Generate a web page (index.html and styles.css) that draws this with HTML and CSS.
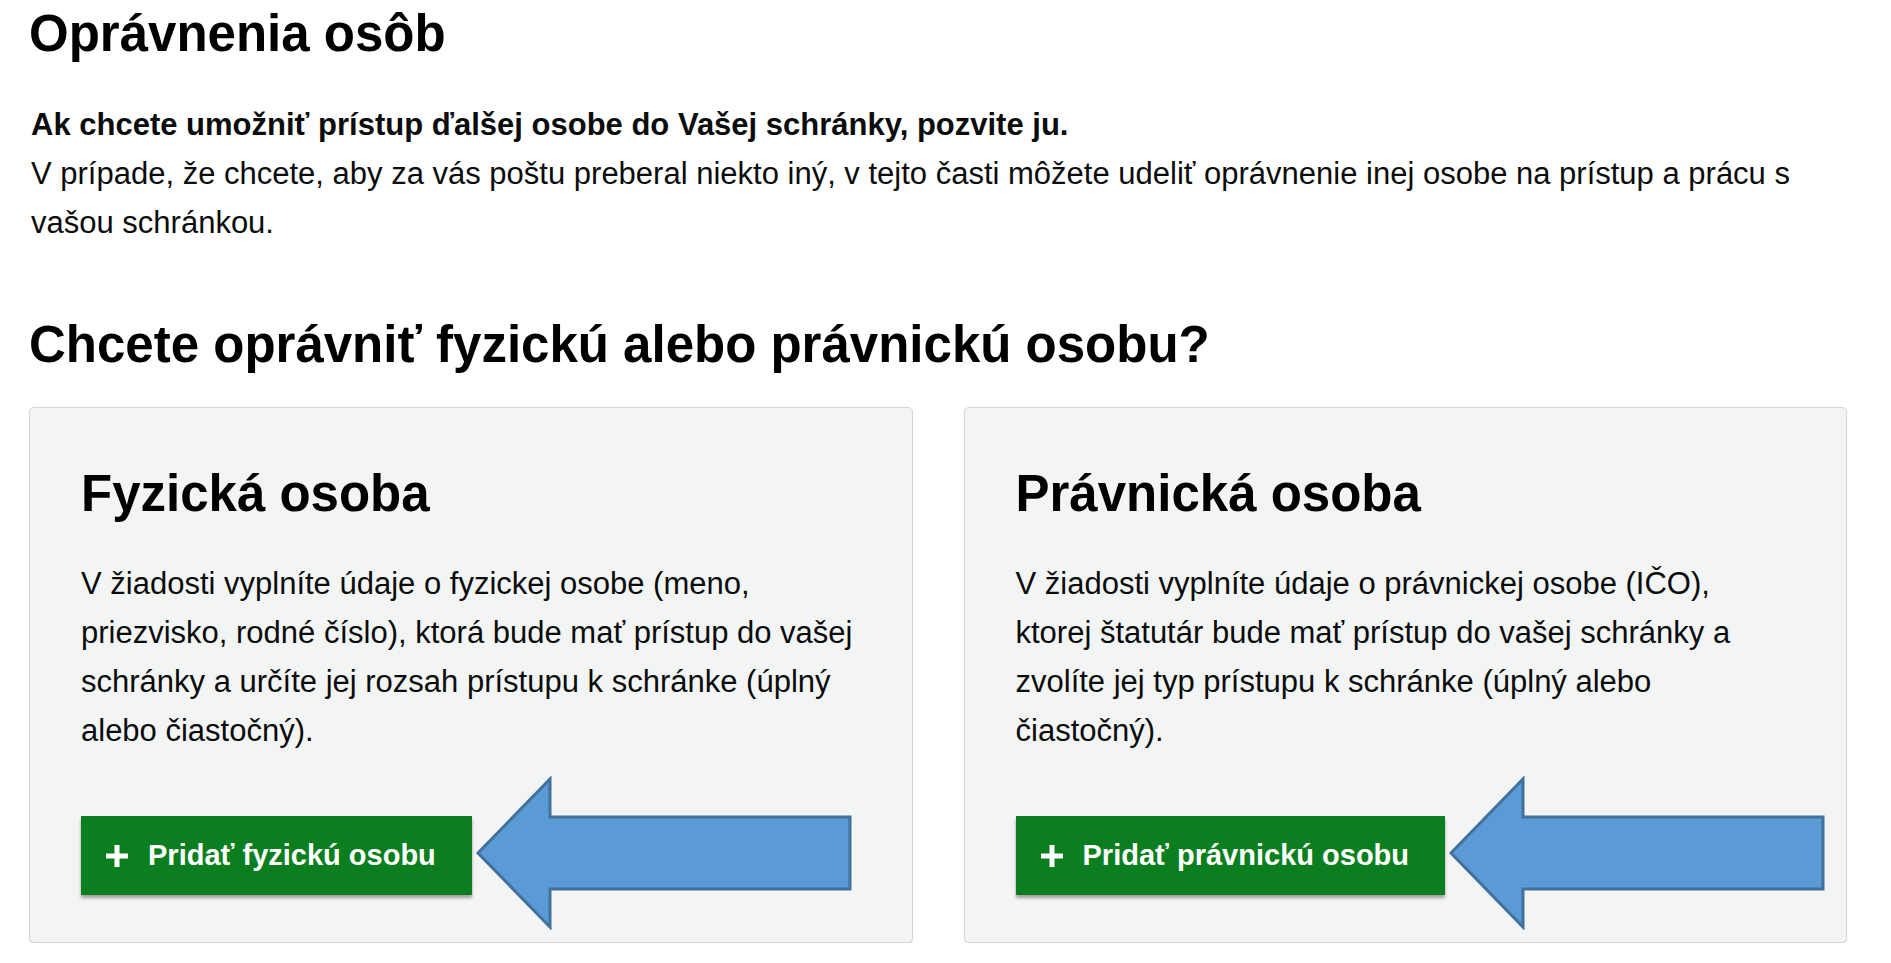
FILE: index.html
```html
<!DOCTYPE html>
<html lang="sk">
<head>
    <meta charset="utf-8">
    <title>Oprávnenia osôb</title>
    <link rel="stylesheet" href="styles.css">
</head>
<body>
    <div class="page">
        <h1 class="page-title">Oprávnenia osôb</h1>
        <p class="intro">
            <strong>Ak chcete umožniť prístup ďalšej osobe do Vašej schránky, pozvite ju.</strong><br>
            V prípade, že chcete, aby za vás poštu preberal niekto iný, v tejto časti môžete udeliť oprávnenie inej osobe na prístup a prácu s vašou schránkou.
        </p>

        <h2 class="section-title">Chcete oprávniť fyzickú alebo právnickú osobu?</h2>

        <div class="cards">
            <div class="card">
                <h3 class="card-title">Fyzická osoba</h3>
                <p class="card-text">V žiadosti vyplníte údaje o fyzickej osobe (meno, priezvisko, rodné číslo), ktorá bude mať prístup do vašej schránky a určíte jej rozsah prístupu k schránke (úplný alebo čiastočný).</p>
                <div class="card-action">
                    <button class="btn-add">
                        <svg class="plus" width="22" height="22" viewBox="0 0 22 22"><rect x="8.5" y="0" width="5" height="22" fill="#fff"/><rect x="0" y="8.5" width="22" height="5" fill="#fff"/></svg>
                        Pridať fyzickú osobu
                    </button>
                    <!-- arrow pointing at the button -->
                    <svg class="hint-arrow" width="378" height="154" viewBox="0 0 378 154"><path d="M3 77 L75 3 L75 41 L375 41 L375 113 L75 113 L75 151 Z" fill="#5b9bd5" stroke="#41719c" stroke-width="3" stroke-linejoin="miter"/></svg>
                </div>
            </div>

            <div class="card">
                <h3 class="card-title">Právnická osoba</h3>
                <p class="card-text">V žiadosti vyplníte údaje o právnickej osobe (IČO), ktorej štatutár bude mať prístup do vašej schránky a zvolíte jej typ prístupu k schránke (úplný alebo čiastočný).</p>
                <div class="card-action">
                    <button class="btn-add">
                        <svg class="plus" width="22" height="22" viewBox="0 0 22 22"><rect x="8.5" y="0" width="5" height="22" fill="#fff"/><rect x="0" y="8.5" width="22" height="5" fill="#fff"/></svg>
                        Pridať právnickú osobu
                    </button>
                    <svg class="hint-arrow" width="378" height="154" viewBox="0 0 378 154"><path d="M3 77 L75 3 L75 41 L375 41 L375 113 L75 113 L75 151 Z" fill="#5b9bd5" stroke="#41719c" stroke-width="3" stroke-linejoin="miter"/></svg>
                </div>
            </div>
        </div>
    </div>
</body>
</html>
```

FILE: styles.css
```css
body {
    margin: 0;
    font-family: "Liberation Sans", Arial, sans-serif;
    color: #0b0c0c;
    background-color: #fff;
}

.page {
    padding: 4px 44px 0 29px;
}

.page-title,
.section-title,
.card-title {
    font-size: 51px;
    line-height: 60px;
    font-weight: bold;
    margin: 0;
    color: #000;
}

.intro {
    font-size: 31px;
    line-height: 49px;
    margin: 36px 0 0 2px;
}

.section-title {
    margin-top: 68px;
}

.cards {
    display: grid;
    grid-template-columns: 1fr 1fr;
    gap: 51px;
    margin-top: 32px;
}

.card {
    background-color: #f3f4f4;
    border: 1px solid #d3d7da;
    border-radius: 5px;
    box-shadow: 0 1px 1px rgba(0, 0, 0, 0.12);
    padding: 56px 56px 47px 51px;
}

.card-text {
    font-size: 31px;
    line-height: 49px;
    margin: 35px 0 0 0;
}

.card-action {
    position: relative;
    display: inline-block;
    margin-top: 61px;
}

.btn-add {
    display: flex;
    align-items: center;
    gap: 20px;
    height: 79px;
    padding: 0 36px 0 25px;
    background-color: #0b7f1f;
    color: #fff;
    border: none;
    border-radius: 0;
    font-family: inherit;
    font-size: 29px;
    font-weight: bold;
    box-shadow: 0 3px 3px rgba(0, 0, 0, 0.35);
    cursor: pointer;
}

.plus {
    display: block;
}

.hint-arrow {
    position: absolute;
    left: 100%;
    top: -40px;
    margin-left: 3px;
}
```
